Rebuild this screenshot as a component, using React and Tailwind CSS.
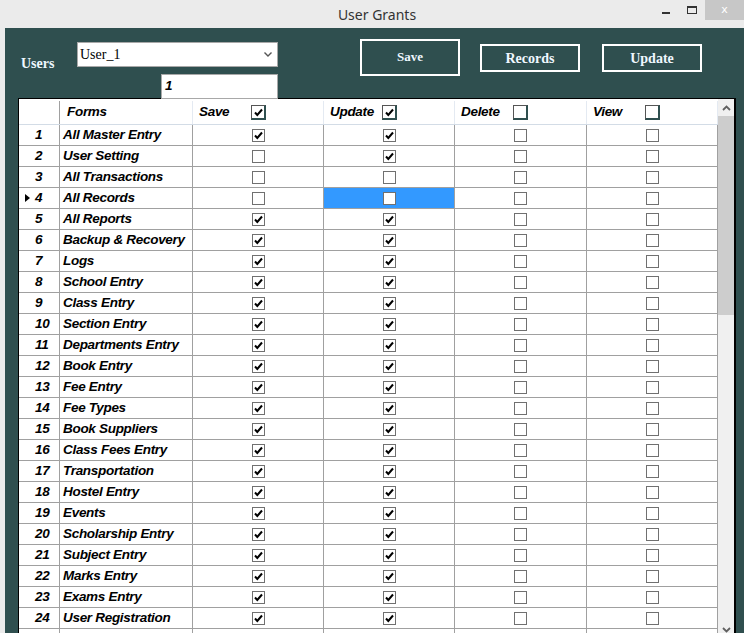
import React from "react";

const names = [
  "All Master Entry",
  "User Setting",
  "All Transactions",
  "All Records",
  "All Reports",
  "Backup & Recovery",
  "Logs",
  "School Entry",
  "Class Entry",
  "Section Entry",
  "Departments Entry",
  "Book Entry",
  "Fee Entry",
  "Fee Types",
  "Book Suppliers",
  "Class Fees Entry",
  "Transportation",
  "Hostel Entry",
  "Events",
  "Scholarship Entry",
  "Subject Entry",
  "Marks Entry",
  "Exams Entry",
  "User Registration",
];

const rows = names.map((name, i) => ({
  id: i + 1,
  name,
  save: ![2, 3, 4].includes(i + 1),
  update: ![3, 4].includes(i + 1),
  del: false,
  view: false,
}));

const gridFont = "font-['Liberation_Sans',Arial,sans-serif] font-bold italic text-[13.5px] tracking-[-0.3px] text-black";
const serif = "font-['Liberation_Serif','Times_New_Roman',serif]";

function CheckMark() {
  return (
    <svg width="9" height="9" viewBox="0 0 9 9" className="block">
      <path d="M1 4.5 L3.3 7 L8 1.5" fill="none" stroke="#000" strokeWidth="2" />
    </svg>
  );
}

function CellCheck({ checked }) {
  return (
    <div className="w-[13px] h-[13px] border border-[#707070] bg-white flex items-center justify-center">
      {checked && <CheckMark />}
    </div>
  );
}

function HeadCheck({ checked }) {
  return (
    <div className="w-[15px] h-[15px] border border-[#555] border-r-2 border-b-2 border-r-[#2f4f4f] border-b-[#2f4f4f] bg-white flex items-center justify-center">
      {checked && <CheckMark />}
    </div>
  );
}

function HeadCell({ label, checked, w }) {
  return (
    <div className={`${w} h-full flex items-center pl-[6px] border-r border-[#e4eaf2]`}>
      <span className="w-[52px]">{label}</span>
      <HeadCheck checked={checked} />
    </div>
  );
}

function Cell({ w, checked, selected }) {
  return (
    <div
      className={`${w} h-full flex items-center justify-center border-r border-[#a0a0a0] ${
        selected ? "bg-[#3399ff]" : "bg-white"
      }`}
    >
      <CellCheck checked={checked} />
    </div>
  );
}

function TitleBar() {
  return (
    <div className="relative h-[28px] flex items-center justify-center bg-[#ebebeb]">
      <span className="ml-[10px] font-['Noto_Sans',sans-serif] text-[14px] text-[#333]">User Grants</span>
      <div className="absolute right-0 top-0 flex items-start">
        <div className="w-[26px] h-[20px] flex items-center justify-center">
          <div className="w-[8px] h-[2px] mt-[5px] bg-[#333]" />
        </div>
        <div className="w-[26px] h-[20px] flex items-center justify-center">
          <div className="w-[10px] h-[8px] border border-[#333] border-t-2 mt-[-1px]" />
        </div>
        <div className="w-[39px] h-[20px] bg-[#c7c7c7] flex items-center justify-center text-white font-['DejaVu_Sans',sans-serif] text-[11px]">
          x
        </div>
      </div>
    </div>
  );
}

export default function App() {
  return (
    <div className="w-[744px] h-[633px] overflow-hidden bg-[#ebebeb] flex flex-col">
      <TitleBar />
      <div className="flex-1 ml-[5px] bg-[#2f4f4f] overflow-hidden">
        {/* top controls */}
        <div className="h-[70px] flex items-start">
          <div className={`ml-[16px] mt-[25px] w-[56px] ${serif} font-bold text-[14px] text-[#eef8ff]`}>Users</div>
          <div className="w-[201px] mt-[14px] flex flex-col">
            <div className="h-[25px] bg-white border border-[#a8a8a8] flex items-center justify-between pl-[2px] pr-[5px]">
              <span className={`${serif} text-[14px] text-black`}>User_1</span>
              <svg width="8" height="5" viewBox="0 0 8 5">
                <path d="M0.5 0.5 L4 4 L7.5 0.5" fill="none" stroke="#555" strokeWidth="1.4" />
              </svg>
            </div>
            <div className="ml-[84px] mt-[7px] w-[117px] h-[25px] bg-white border border-[#a8a8a8] flex items-center pl-[3px]">
              <span className={gridFont}>1</span>
            </div>
          </div>
          <button className={`ml-[82px] mt-[11px] w-[100px] h-[37px] border-2 border-white ${serif} font-bold text-[13px] text-[#f0f8ff] pb-[1px]`}>
            Save
          </button>
          <button className={`ml-[20px] mt-[16px] w-[100px] h-[28px] border-2 border-white ${serif} font-bold text-[14px] text-[#f0f8ff]`}>
            Records
          </button>
          <button className={`ml-[22px] mt-[16px] w-[100px] h-[28px] border-2 border-white ${serif} font-bold text-[14px] text-[#f0f8ff]`}>
            Update
          </button>
        </div>

        {/* grid */}
        <div className="ml-[13px] w-[718px] h-[540px] border-l border-t border-r-2 border-black flex bg-white">
          <div className={`w-[699px] ${gridFont}`}>
            <div className="h-[26px] flex border-b border-[#d3dce6] pt-[2px]">
              <div className="w-[41px] h-full border-r border-[#a0a0a0]" />
              <div className="w-[133px] h-full flex items-center pl-[7px] border-r border-[#e4eaf2]">Forms</div>
              <HeadCell w="w-[131px]" label="Save" checked />
              <HeadCell w="w-[131px]" label="Update" checked />
              <HeadCell w="w-[132px]" label="Delete" checked={false} />
              <HeadCell w="w-[131px]" label="View" checked={false} />
            </div>
            {rows.map((r) => (
              <div key={r.id} className="h-[21px] flex border-b border-[#a0a0a0]">
                <div className="w-[41px] h-full flex items-center border-r border-[#a0a0a0] bg-white">
                  <div className="w-[16px] flex justify-center">
                    {r.id === 4 && (
                      <svg width="5" height="8" viewBox="0 0 5 8" className="ml-[1px]">
                        <path d="M0 0 L5 4 L0 8 Z" fill="#000" />
                      </svg>
                    )}
                  </div>
                  <span>{r.id}</span>
                </div>
                <div className="w-[133px] h-full flex items-center pl-[3px] border-r border-[#a0a0a0] whitespace-nowrap overflow-hidden">
                  {r.name}
                </div>
                <Cell w="w-[131px]" checked={r.save} />
                <Cell w="w-[131px]" checked={r.update} selected={r.id === 4} />
                <Cell w="w-[132px]" checked={r.del} />
                <Cell w="w-[131px]" checked={r.view} />
              </div>
            ))}
            {/* next row, cut off by the window edge */}
            <div className="h-[21px] flex border-b border-[#a0a0a0]">
              <div className="w-[41px] h-full border-r border-[#a0a0a0]" />
              <div className="w-[133px] h-full border-r border-[#a0a0a0]" />
              <Cell w="w-[131px]" checked />
              <Cell w="w-[131px]" checked />
              <Cell w="w-[132px]" checked={false} />
              <Cell w="w-[131px]" checked={false} />
            </div>
          </div>

          {/* scrollbar */}
          <div className="w-[16px] bg-[#f0f0f0] flex flex-col">
            <div className="h-[17px] flex items-center justify-center">
              <svg width="9" height="6" viewBox="0 0 9 6">
                <path d="M1 5 L4.5 1.5 L8 5" fill="none" stroke="#606060" strokeWidth="1.8" />
              </svg>
            </div>
            <div className="h-[199px] bg-[#cdcdcd]" />
            <div className="flex-1" />
            <div className="h-[17px] flex items-center justify-center">
              <svg width="9" height="6" viewBox="0 0 9 6">
                <path d="M1 1 L4.5 4.5 L8 1" fill="none" stroke="#606060" strokeWidth="1.8" />
              </svg>
            </div>
          </div>
        </div>
      </div>
    </div>
  );
}
